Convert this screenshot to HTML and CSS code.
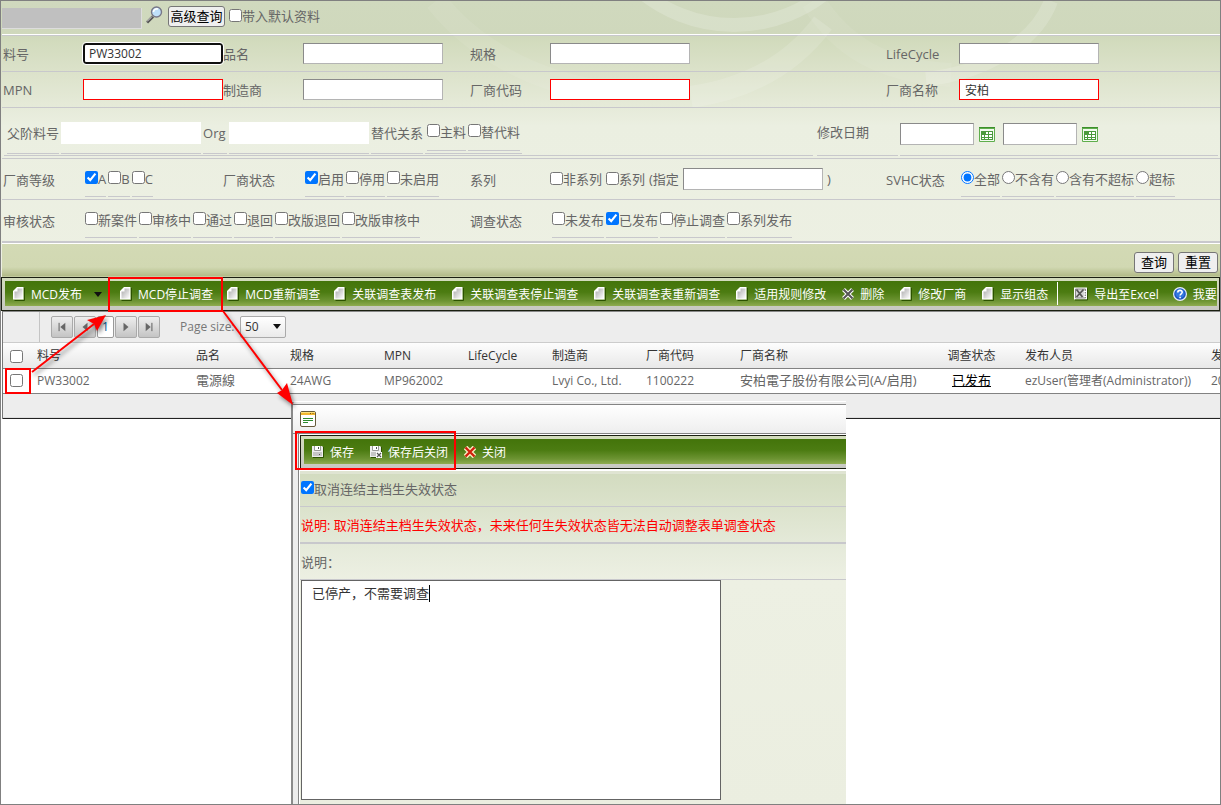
FILE: index.html
```html
<!DOCTYPE html>
<html lang="zh-CN">
<head>
<meta charset="utf-8">
<title>MCD 调查查询</title>
<link rel="stylesheet" href="styles.css">
</head>
<body>
<svg class="defs" aria-hidden="true">
  <defs>
    <linearGradient id="paper" x1="0" y1="0" x2="1" y2="1"><stop offset="0" stop-color="#a8a8a8"/><stop offset="1" stop-color="#fff"/></linearGradient>
    <symbol id="i-doc" viewBox="0 0 12 14"><path d="M1.500 13.500H11.500V1" fill="none" stroke="#2c5200"/><path d="M4 0H10.500V12.500H0V4Z" fill="#fff"/><path d="M4.500 1.500H9.500V11.500H1.500V4.500H4.500Z" fill="url(#paper)"/></symbol>
    <symbol id="i-x" viewBox="0 0 12 12"><path d="M1.500 1.500L10.500 10.500M10.500 1.500L1.500 10.500" stroke="#fff" stroke-width="4"/><path d="M1.500 1.500L10.500 10.500M10.500 1.500L1.500 10.500" stroke="#555" stroke-width="2"/></symbol>
    <symbol id="i-redx" viewBox="0 0 12 12"><path d="M1.500 1.500L10.500 10.500M10.500 1.500L1.500 10.500" stroke="#f8ecc0" stroke-width="5"/><path d="M1.500 1.500L10.500 10.500M10.500 1.500L1.500 10.500" stroke="#d0200c" stroke-width="2.400"/></symbol>
    <symbol id="i-excel" viewBox="0 0 14 13"><path d="M0 0H13V12H0Z" fill="#fff"/><path d="M1.500 1.500H11.500V10.500H1.500Z" fill="#d8d8d8" stroke="#888"/><path d="M2.500 2L8.500 9.500M9.500 2L2.500 9.500" stroke="#555" stroke-width="1.800"/><path d="M10 4H12M10 6.500H12M10 9H12" stroke="#fff"/><path d="M1 12.500H13.500V1" fill="none" stroke="#2c5200"/></symbol>
    <symbol id="i-help" viewBox="0 0 14 14"><circle cx="7" cy="7" r="7" fill="#e8eefc"/><circle cx="7" cy="7" r="5.800" fill="#1c55c0"/><circle cx="7" cy="6.500" r="4.500" fill="#3478e0"/><path d="M4.800 5.400C4.800 2.600 9.300 2.700 9.200 5.300C9.100 6.800 7.100 6.800 7.100 8.500M7.100 9.800V11.200" fill="none" stroke="#fff" stroke-width="1.600"/></symbol>
    <symbol id="i-save" viewBox="0 0 12 12"><path d="M1 11.500H11.500V1" stroke="#2c5200" fill="none"/><path d="M0 0H10L11 1V11H0Z" fill="#eee"/><path d="M2 0H9V4H2Z" fill="#fff"/><path d="M2.500 0V4.500H8.500V0" stroke="#999" fill="none"/><path d="M6.500 1V3" stroke="#555"/><path d="M1 6H10V10H1Z" fill="#c6c6c6"/><path d="M7 8H8V9H7Z" fill="#555"/></symbol>
    <symbol id="i-saveclose" viewBox="0 0 12 12"><use href="#i-save" width="12" height="12"/><path d="M6 6H12V12H6Z" fill="#fff"/><path d="M7 7L11 11M11 7L7 11" stroke="#555" stroke-width="1.200"/></symbol>
    <symbol id="i-cal" viewBox="0 0 16 16"><path d="M0 0H16V3H0Z" fill="#3d8f2c"/><path d="M.500 1.500H15.500V14.500H.500Z" fill="#f2faef" stroke="#5fae4c"/><path d="M2 4H14V13H2Z" fill="#4b9a3c"/><path d="M7 5H9V7H7ZM10 5H13V7H10ZM3 8H5V10H3ZM6 8H9V10H6ZM10 8H13V10H10ZM3 11H5V12H3ZM6 11H9V12H6ZM10 11H13V12H10Z" fill="#fff"/></symbol>
  </defs>
</svg>

<main class="page">
  <svg class="swoosh" width="1200" height="240" viewBox="0 0 1200 240" aria-hidden="true">
    <g fill="none" stroke="#fff">
      <circle cx="733" cy="-122" r="146" stroke-width="14" stroke-opacity=".18"/>
      <path d="M1050 0C1035 40 985 72 925 78" stroke-width="14" stroke-opacity=".16"/>
      <path d="M822 22C790 65 745 88 690 96" stroke-width="22" stroke-opacity=".13"/>
      <path d="M435 0C470 45 530 80 600 90" stroke-width="22" stroke-opacity=".07"/>
      <path d="M812 0C840 45 880 70 950 74" stroke-width="24" stroke-opacity=".07"/>
    </g>
  </svg>

  <form class="search">
    <div class="topbar">
      <span class="blank"></span>
      <svg class="lens" viewBox="0 0 17 18"><path d="M1 16.500L7 10.500" stroke="#555" stroke-width="3" /><path d="M1 15.500L6 10.500" stroke="#ddd"/><circle cx="10.500" cy="6" r="5" fill="#bfe0fa" stroke="#778" stroke-width="1.400"/><path d="M7.500 6C7.500 3.500 10 2.500 12 3" fill="none" stroke="#fff" stroke-width="1.600"/></svg>
      <button type="button" class="btn">高级查询</button>
      <label class="plain"><input type="checkbox">带入默认资料</label>
    </div>

    <div class="row grid">
      <label for="f1">料号</label><input id="f1" class="box focused" value="PW33002">
      <label for="f2">品名</label><input id="f2" class="box">
      <label for="f3">规格</label><input id="f3" class="box">
      <label for="f4">LifeCycle</label><input id="f4" class="box">
    </div>
    <div class="row grid">
      <label for="f5">MPN</label><input id="f5" class="box red">
      <label for="f6">制造商</label><input id="f6" class="box">
      <label for="f7">厂商代码</label><input id="f7" class="box red">
      <label for="f8">厂商名称</label><input id="f8" class="box red" value="安柏">
    </div>

    <div class="row nested">
      <div class="cell parents">
        <label class="under" for="g1">父阶料号</label>
        <span class="under"><input id="g1" class="flat"></span>
        <label class="under org" for="g2">Org</label>
        <span class="under"><input id="g2" class="flat"></span>
        <span class="under">替代关系</span>
        <span class="under alt">
          <label class="opt"><input type="checkbox">主料</label>
          <label class="opt"><input type="checkbox">替代料</label>
        </span>
      </div>
      <label class="cell datelabel" for="d1">修改日期</label>
      <div class="cell dates">
        <input id="d1" class="box date"><svg class="cal"><use href="#i-cal"/></svg>
        <input id="d2" class="box date" aria-label="修改日期至"><svg class="cal"><use href="#i-cal"/></svg>
      </div>
    </div>

    <div class="row grid tall">
      <span>厂商等级</span>
      <div class="opts">
        <label class="opt"><input type="checkbox" checked>A</label>
        <label class="opt"><input type="checkbox">B</label>
        <label class="opt"><input type="checkbox">C</label>
      </div>
      <span>厂商状态</span>
      <div class="opts">
        <label class="opt"><input type="checkbox" checked>启用</label>
        <label class="opt"><input type="checkbox">停用</label>
        <label class="opt"><input type="checkbox">未启用</label>
      </div>
      <span>系列</span>
      <div class="series">
        <label class="plain"><input type="checkbox">非系列</label>
        <label class="plain"><input type="checkbox">系列</label>
        <label for="s1">(指定</label><input id="s1" class="box"><span>)</span>
      </div>
      <span>SVHC状态</span>
      <div class="opts">
        <label class="opt"><input type="radio" name="svhc" checked>全部</label>
        <label class="opt"><input type="radio" name="svhc">不含有</label>
        <label class="opt"><input type="radio" name="svhc">含有不超标</label>
        <label class="opt"><input type="radio" name="svhc">超标</label>
      </div>
    </div>

    <div class="row grid tall last">
      <span>审核状态</span>
      <div class="opts wide">
        <label class="opt"><input type="checkbox">新案件</label>
        <label class="opt"><input type="checkbox">审核中</label>
        <label class="opt"><input type="checkbox">通过</label>
        <label class="opt"><input type="checkbox">退回</label>
        <label class="opt"><input type="checkbox">改版退回</label>
        <label class="opt"><input type="checkbox">改版审核中</label>
      </div>
      <span>调查状态</span>
      <div class="opts">
        <label class="opt"><input type="checkbox">未发布</label>
        <label class="opt"><input type="checkbox" checked>已发布</label>
        <label class="opt"><input type="checkbox">停止调查</label>
        <label class="opt"><input type="checkbox">系列发布</label>
      </div>
    </div>

    <div class="actions">
      <button type="button" class="btn">查询</button>
      <button type="reset" class="btn">重置</button>
    </div>
  </form>

  <div class="frame">
    <nav class="toolbar">
      <button type="button" class="tool near"><svg class="doc"><use href="#i-doc"/></svg>MCD发布<i class="caret"></i></button>
      <button type="button" class="tool near"><svg class="doc"><use href="#i-doc"/></svg>MCD停止调查</button>
      <button type="button" class="tool near"><svg class="doc"><use href="#i-doc"/></svg>MCD重新调查</button>
      <button type="button" class="tool"><svg class="doc"><use href="#i-doc"/></svg>关联调查表发布</button>
      <button type="button" class="tool"><svg class="doc"><use href="#i-doc"/></svg>关联调查表停止调查</button>
      <button type="button" class="tool"><svg class="doc"><use href="#i-doc"/></svg>关联调查表重新调查</button>
      <button type="button" class="tool"><svg class="doc"><use href="#i-doc"/></svg>适用规则修改</button>
      <button type="button" class="tool"><svg class="sq"><use href="#i-x"/></svg>删除</button>
      <button type="button" class="tool"><svg class="doc"><use href="#i-doc"/></svg>修改厂商</button>
      <button type="button" class="tool"><svg class="doc"><use href="#i-doc"/></svg>显示组态</button>
      <span class="sep"></span>
      <button type="button" class="tool near"><svg class="big"><use href="#i-excel"/></svg>导出至Excel</button>
      <button type="button" class="tool"><svg class="big"><use href="#i-help"/></svg>我要查询</button>
    </nav>
  </div>

  <section class="results">
    <div class="pager">
      <span class="stub"></span>
      <div class="pages">
        <button type="button" class="pg" aria-label="首页"><svg viewBox="0 0 12 12"><path d="M2.500 1V11" stroke="#444" fill="none"/><path d="M10 1V11L4 6Z"/></svg></button>
        <button type="button" class="pg" aria-label="上一页"><svg viewBox="0 0 12 12"><path d="M9 1V11L3 6Z"/></svg></button>
        <a class="current" href="#">1</a>
        <button type="button" class="pg" aria-label="下一页"><svg viewBox="0 0 12 12"><path d="M3 1V11L9 6Z"/></svg></button>
        <button type="button" class="pg" aria-label="末页"><svg viewBox="0 0 12 12"><path d="M9.500 1V11" stroke="#444" fill="none"/><path d="M2 1V11L8 6Z"/></svg></button>
      </div>
      <label class="pslabel" for="ps">Page size:</label>
      <span class="selwrap"><select id="ps"><option>50</option></select><i class="caret"></i></span>
    </div>
    <table>
      <colgroup><col class="w27"><col class="w159"><col class="w94"><col class="w94"><col class="w84"><col class="w84"><col class="w94"><col class="w94"><col class="w192"><col class="w93"><col class="w186"><col class="w94"></colgroup>
      <thead><tr><th><input type="checkbox" aria-label="全选"></th><th>料号</th><th>品名</th><th>规格</th><th>MPN</th><th>LifeCycle</th><th>制造商</th><th>厂商代码</th><th>厂商名称</th><th class="mid">调查状态</th><th>发布人员</th><th>发布日期</th></tr></thead>
      <tbody><tr><td><input type="checkbox" aria-label="选择 PW33002"></td><td>PW33002</td><td>電源線</td><td>24AWG</td><td>MP962002</td><td></td><td>Lvyi Co., Ltd.</td><td>1100222</td><td>安柏電子股份有限公司(A/启用)</td><td class="mid"><a href="#">已发布</a></td><td>ezUser(管理者(Administrator))</td><td>2021</td></tr></tbody>
    </table>
    <div class="tail"></div>
  </section>

  <section class="dialog" role="dialog" aria-label="MCD停止调查">
    <header class="dtitle">
      <svg viewBox="0 0 16 16"><rect x=".5" y=".5" width="15" height="15" rx="1.500" fill="#fff" stroke="#665a3a"/><path d="M1 1H15V4H1Z" fill="#f3b730"/><path d="M1 1.500H15" stroke="#fbe07c"/><path d="M10 2.500H11M12.500 2.500H13.500" stroke="#7a5a10"/><path d="M3 7.500H13M3 9.500H13M3 11.500H8" stroke="#2d8a2d"/></svg>
    </header>
    <div class="dbody">
      <div class="frame dframe">
        <nav class="toolbar">
          <button type="button" class="tool"><svg class="sq"><use href="#i-save"/></svg>保存</button>
          <button type="button" class="tool"><svg class="sq"><use href="#i-saveclose"/></svg>保存后关闭</button>
          <button type="button" class="tool"><svg class="sq"><use href="#i-redx"/></svg>关闭</button>
        </nav>
      </div>
      <div class="dform">
        <div class="drow"><label class="plain"><input type="checkbox" checked>取消连结主档生失效状态</label></div>
        <div class="drow warn">说明: 取消连结主档生失效状态，未来任何生失效状态皆无法自动调整表单调查状态</div>
        <div class="drow"><label for="memo">说明：</label></div>
        <div class="memo"><textarea id="memo">已停产，不需要调查</textarea><i class="cursor"></i></div>
      </div>
    </div>
  </section>

  <div class="mark mark-check"></div>
  <div class="mark mark-tool"></div>
  <div class="mark mark-save"></div>
  <svg class="arrows" width="320" height="420" viewBox="0 0 320 420" aria-hidden="true">
    <g fill="red" stroke="red">
      <path d="M31 371L93 323M222 310L281 389" stroke-width="2" fill="none"/>
      <path d="M105 314L96 330L93 323L86 319Z" stroke="none"/>
      <path d="M292 404L276 392L281 389L286 382Z" stroke="none"/>
    </g>
  </svg>
</main>
</body>
</html>
```
FILE: styles.css
```css
* { box-sizing: border-box; }

body {
  margin: 0;
  background: #fff;
  color: #666;
  font: 13px/18px "Open Sans", "Noto Sans CJK SC", sans-serif;
}

input, button, textarea, select { font: inherit; color: inherit; margin: 0; }
input[type="checkbox"], input[type="radio"] { width: 13px; height: 13px; flex: none; }
svg { display: block; flex: none; }
.defs { position: absolute; width: 0; height: 0; }

.page {
  position: relative;
  min-height: 100vh;
  border: 1px solid #808080;
  overflow: hidden;
}

/* search form */
.search {
  padding-left: 1px;
  background: linear-gradient(#d0d9be 0, #cfd8bc 34px, #d2dbbd 40px, #dde3cc 75px, #ebefe1 125px, #edf0e3 100%);
}
.swoosh { position: absolute; left: 0; top: 0; }

.topbar {
  display: flex;
  align-items: flex-start;
  height: 35px;
  padding-top: 5px;
  border-bottom: 1px solid #c8c8cc;
  box-shadow: inset 0 -1px #fff;
}
.blank { width: 140px; height: 21px; margin-top: 2px; background: #c0c0c0; border-right: 1px solid #ddd; border-bottom: 1px solid #ddd; }
.lens { width: 17px; height: 18px; margin: 0 5px 0 4px; }
.btn {
  height: 21px;
  padding: 0 1px;
  border: 1px solid #767676;
  border-radius: 3px;
  background: #efefef;
  color: #000;
  line-height: 19px;
}
.topbar .btn { width: 57px; }
.plain { display: flex; align-items: center; white-space: nowrap; }
.topbar .plain { margin: 1px 0 0 4px; }
.plain input { margin-bottom: 2px; }

.row { position: relative; border-bottom: 1px solid #c8c8cc; min-height: 36px; }
.grid {
  display: grid;
  grid-template-columns: 80px 140px 80px 167px 80px minmax(300px, 1fr) 73px 261px;
  align-items: center;
  padding-left: 1px;
}
.box {
  width: 140px;
  height: 21px;
  padding: 0 5px;
  border: 1px solid #b4b4b4;
  border-color: #8a8a8a #b4b4b4 #b4b4b4 #8a8a8a;
  background: #fff;
  color: #333;
  font-size: 12px;
}
.box.red { border-color: #f00; }
.box.focused { border: 2px solid #101010; border-radius: 3px; outline: 1px solid #fff; padding: 0 4px; }

.nested { display: flex; gap: 2px; padding: 0 2px; height: 51px; }
.cell { display: flex; align-items: center; margin: 1px 0 2px; border-bottom: 1px solid #c8c8cc; }
.parents { flex: 1; gap: 2px; padding: 0 3px; margin-right: 2px; }
.under { display: flex; align-items: center; height: 41px; margin-top: 3px; border-bottom: 1px solid #c8c8cc; }
.org { width: 24px; }
.flat { width: 140px; height: 22px; border: 0; padding: 0 5px; background: #fff; }
.alt { gap: 2px; padding: 0 2px; }
.alt .opt { height: 35px; margin-top: 0; padding-bottom: 2px; }
.datelabel { width: 81px; }
.dates { width: 318px; padding-top: 4px; }
.dates .date { width: 74px; height: 22px; }
.cal { width: 16px; height: 16px; margin: 2px 8px 0 5px; }

.tall { height: 41px; }
.tall > span { padding-top: 2px; }
.tall.last { height: 43px; border-bottom: 2px solid #c8c8cc; box-shadow: 0 1px #fff; padding-bottom: 1px; }
.opts { display: flex; gap: 2px; padding: 0 2px; align-self: start; }
.wide { grid-column: span 3; }
.opt {
  display: flex;
  align-items: center;
  height: 36px;
  margin-top: 2px;
  border-bottom: 1px solid #c8c8cc;
  white-space: nowrap;
}
.opt input { margin-bottom: 3px; }
.series { display: flex; align-items: center; gap: 4px; }
.series .box { height: 22px; }

.actions {
  position: relative;
  display: flex;
  justify-content: flex-end;
  gap: 4px;
  height: 34px;
  padding: 9px 2px 0;
  background: linear-gradient(#d3dab5 0, #d1d8b2 24px, #b2bb88 33px, #d3dab5 34px);
  box-shadow: inset 0 1px #fff;
}
.actions .btn { width: 40px; padding: 0; }

/* toolbars */
.frame {
  position: relative;
  padding: 3px 2px 4px 3px;
  border: 1px solid #1a1f10;
  background: linear-gradient(#d3dcbc, #c8c8c4);
}
.toolbar {
  display: flex;
  height: 25px;
  padding-left: 8px;
  overflow: hidden;
  background: linear-gradient(#43740a, #4c7c12 45%, #6d9433 80%, #8fac50);
}
.tool {
  display: flex;
  align-items: center;
  flex: none;
  height: 25px;
  margin-right: 16px;
  padding: 2px 0 0;
  border: 0;
  background: none;
  color: #fff;
  font-size: 12px;
  white-space: nowrap;
}
.near { margin-right: 14px; }
.tool svg { margin: 0 6px 2px 0; }
.doc { width: 12px; height: 14px; }
.sq { width: 12px; height: 12px; }
.big { width: 14px; height: 14px; }
.caret { width: 0; height: 0; border: 4px solid transparent; border-top: 5px solid #111; border-bottom: 0; }
.tool .caret { margin: 0 4px 0 12px; }
.sep { flex: none; width: 1px; background: #fff; margin: 1px 16px 1px -7px; }

/* results */
.results { position: relative; margin-left: 1px; border-top: 1px solid #888; border-left: 1px solid #777; background: #ededed; overflow: hidden; }
.pager { display: flex; align-items: center; height: 31px; border-bottom: 1px solid #ccc; }
.stub { width: 37px; align-self: stretch; border-right: 1px solid #c4c4c4; }
.pages { display: flex; align-items: center; gap: 1px; margin: 0 20px 0 11px; }
.pg { width: 22px; height: 22px; padding: 0 5px; border: 1px solid #aaa; border-radius: 2px; background: linear-gradient(#eee, #c4c4c4); }
.pg svg { width: 10px; height: 10px; fill: #666; }
.current { width: 17px; height: 22px; border: 1px solid #999; border-radius: 2px; background: #fff; color: #00619a; line-height: 20px; text-align: center; text-decoration: none; font-size: 12px; }
.pslabel { width: 60px; font-size: 12px; white-space: nowrap; color: #777; }
.selwrap { position: relative; }
.selwrap .caret { position: absolute; right: 5px; top: 8px; pointer-events: none; }
select { appearance: none; display: block; width: 46px; height: 22px; padding: 0 4px; border: 1px solid #aaa; border-radius: 2px; background: linear-gradient(#fff, #eaeaea); color: #333; font-size: 12px; }

table { width: 1295px; table-layout: fixed; border-collapse: collapse; text-align: left; }
th, td { height: 25px; padding: 0 7px; border-bottom: 1px solid #828282; font-weight: 400; font-size: 12px; white-space: nowrap; }
th { padding-top: 2px; background: linear-gradient(#fdfdfd, #e8e8e8); color: #333; }
td { background: #fff; }
td:nth-child(3), td:nth-child(9), td:nth-child(10) { font-size: 13px; line-height: 16px; padding-bottom: 2px; }
th input, td input { display: block; }
td a { color: #000; }
.mid { text-align: center; }
.w27 { width: 27px; } .w159 { width: 159px; } .w94 { width: 94px; } .w84 { width: 84px; }
.w192 { width: 192px; } .w93 { width: 93px; } .w186 { width: 186px; }
.tail { height: 25px; border-bottom: 1px solid #222; box-shadow: inset 0 -1px #ddd; }

/* dialog */
.dialog {
  position: absolute;
  left: 290px;
  top: 400px;
  bottom: 0;
  width: 555px;
  padding-top: 2px;
  border-left: 2px solid #8a8a8a;
  border-top: 1px solid #fff;
  border-top-left-radius: 4px;
  background: #ececec;
  overflow: hidden;
}
.dtitle { height: 30px; padding: 6px 7px; border-top: 1px solid #848484; border-bottom: 1px solid #848484; background: linear-gradient(#fff, #eee); }
.dtitle svg { width: 16px; height: 16px; }
.dbody { margin-left: 5px; border-left: 1px solid #848484; padding: 1px 0 0 1px; background: #fff; }
.dframe { border-right: 0; padding-right: 0; }
.dform { margin-top: 2px; background: linear-gradient(#d2dbbf, #dbe2cb 35px, #e5eada 75px, #edf0e3 110px, #ebeee0); }
.drow { display: flex; align-items: center; height: 36px; padding-left: 1px; border-bottom: 1px solid #c8c8cc; }
.drow:first-child { box-shadow: inset 0 3px #dfe4d2; }
.drow.warn { height: 37px; color: #f00; white-space: nowrap; border-bottom-width: 2px; }
.memo { position: relative; padding: 0 0 0 1px; height: 228px; }
textarea { display: block; width: 420px; height: 220px; padding: 3px 10px; border: 1px solid #646464; background: #fff; color: #333; resize: none; }
.cursor { position: absolute; left: 129px; top: 5px; width: 1px; height: 17px; background: #000; }

/* annotations */
.mark { position: absolute; border: 2px solid #f00; }
.mark-check { left: 4px; top: 367px; width: 26px; height: 26px; }
.mark-tool { left: 107px; top: 276px; width: 115px; height: 35px; }
.mark-save { left: 294px; top: 430px; width: 161px; height: 39px; }
.arrows { position: absolute; left: 0; top: 0; pointer-events: none; filter: drop-shadow(2px 3px 2px rgba(0, 0, 0, .45)); }
```
